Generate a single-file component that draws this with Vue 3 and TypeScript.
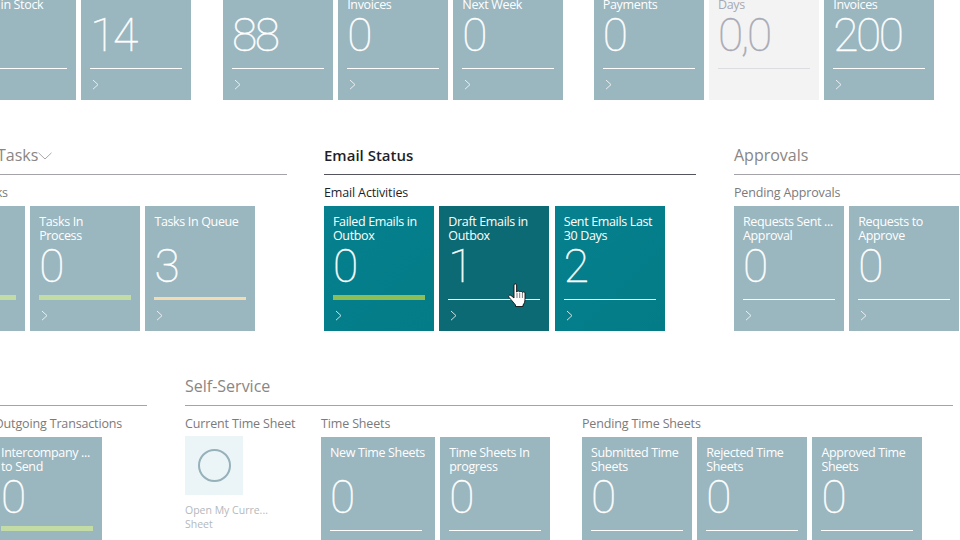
<script setup lang="ts">
interface Tile {
  title: string
  value: string
  bar?: 'line' | 'green' | 'cream' | 'strong'
  kind?: 'muted' | 'teal' | 'hover' | 'blank' | 'wide'
}
interface Group {
  heading?: string
  tiles: Tile[]
  cls: string
}
interface Section {
  heading: string
  cls: string
  chevron?: boolean
  active?: boolean
  groups: Group[]
}

const topGroups: Tile[][] = [
  [
    { title: 'Items\nLow in Stock', value: '', bar: 'line' },
    { title: '', value: '14', bar: 'line' }
  ],
  [
    { title: '', value: '88', bar: 'line' },
    { title: 'Purchase\nInvoices', value: '0', bar: 'line' },
    { title: 'Due\nNext Week', value: '0', bar: 'line' }
  ],
  [
    { title: 'Overdue\nPayments', value: '0', bar: 'line' },
    { title: 'Average\nDays', value: '0,0', bar: 'line', kind: 'blank' },
    { title: 'Sales\nInvoices', value: '200', bar: 'line' }
  ]
]

const middle: Section[] = [
  {
    heading: 'Tasks',
    cls: 'sec-tasks',
    chevron: true,
    groups: [
      {
        heading: 'My Tasks',
        cls: 'grp-right',
        tiles: [
          { title: 'Pending\nTasks', value: '0', bar: 'green' },
          { title: 'Tasks In\nProcess', value: '0', bar: 'green' },
          { title: 'Tasks In Queue', value: '3', bar: 'cream' }
        ]
      }
    ]
  },
  {
    heading: 'Email Status',
    cls: 'sec-email',
    active: true,
    groups: [
      {
        heading: 'Email Activities',
        cls: '',
        tiles: [
          { title: 'Failed Emails in\nOutbox', value: '0', bar: 'strong', kind: 'teal' },
          { title: 'Draft Emails in\nOutbox', value: '1', bar: 'line', kind: 'hover' },
          { title: 'Sent Emails Last\n30 Days', value: '2', bar: 'line', kind: 'teal' }
        ]
      }
    ]
  },
  {
    heading: 'Approvals',
    cls: 'sec-approvals',
    groups: [
      {
        heading: 'Pending Approvals',
        cls: '',
        tiles: [
          { title: 'Requests Sent ...\nApproval', value: '0', bar: 'line' },
          { title: 'Requests to\nApprove', value: '0', bar: 'line' }
        ]
      }
    ]
  }
]

const timeGroups: Group[] = [
  {
    heading: 'Time Sheets',
    cls: 'grp-time',
    tiles: [
      { title: 'New Time Sheets', value: '0', bar: 'line', kind: 'wide' },
      { title: 'Time Sheets In\nprogress', value: '0', bar: 'line' }
    ]
  },
  {
    heading: 'Pending Time Sheets',
    cls: 'grp-pending',
    tiles: [
      { title: 'Submitted Time\nSheets', value: '0', bar: 'line' },
      { title: 'Rejected Time\nSheets', value: '0', bar: 'line' },
      { title: 'Approved Time\nSheets', value: '0', bar: 'line' }
    ]
  }
]

const outgoing: Tile = { title: 'Intercompany ...\nto Send', value: '0', bar: 'green' }
</script>

<template>
  <main class="page">
    <div class="top-row">
      <div v-for="(g, i) in topGroups" :key="i" class="tiles" :class="`top-${i}`">
        <article v-for="(t, j) in g" :key="j" class="tile" :class="t.kind">
          <p class="tile-title">{{ t.title }}</p>
          <p class="tile-value">{{ t.value }}</p>
          <div class="bar-slot"><span class="bar" :class="t.bar"></span></div>
          <svg v-if="t.kind !== 'blank'" class="chev" viewBox="0 0 8 12" width="8" height="12"><path d="M1 1l5 4.6L1 10.2" /></svg>
        </article>
      </div>
    </div>

    <div class="mid-row">
      <section v-for="s in middle" :key="s.heading" class="section" :class="[s.cls, { active: s.active }]">
        <h2 class="heading">
          {{ s.heading }}
          <svg v-if="s.chevron" class="head-chev" viewBox="0 0 14 8" width="14" height="8"><path d="M.5.8L7 7l6.5-6.2" /></svg>
        </h2>
        <div v-for="g in s.groups" :key="g.heading" class="group" :class="g.cls">
          <h3 class="sub">{{ g.heading }}</h3>
          <div class="tiles">
            <article v-for="t in g.tiles" :key="t.title" class="tile" :class="t.kind">
              <p class="tile-title">{{ t.title }}</p>
              <p class="tile-value">{{ t.value }}</p>
              <div class="bar-slot"><span class="bar" :class="t.bar"></span></div>
              <svg class="chev" viewBox="0 0 8 12" width="8" height="12"><path d="M1 1l5 4.6L1 10.2" /></svg>
            </article>
          </div>
        </div>
      </section>
    </div>

    <div class="bottom-row">
      <section class="section sec-out">
        <h2 class="heading">&nbsp;</h2>
        <div class="group grp-out">
          <h3 class="sub">Outgoing Transactions</h3>
          <div class="tiles">
            <article class="tile">
              <p class="tile-title">{{ outgoing.title }}</p>
              <p class="tile-value">{{ outgoing.value }}</p>
              <div class="bar-slot"><span class="bar green"></span></div>
            </article>
          </div>
        </div>
      </section>
      <section class="section sec-self">
        <h2 class="heading">Self-Service</h2>
        <div class="self-groups">
          <div class="group grp-current">
            <h3 class="sub">Current Time Sheet</h3>
            <div class="action-icon"><span class="ring"></span></div>
            <p class="action-label">Open My Curre...<br />Sheet</p>
          </div>
          <div v-for="g in timeGroups" :key="g.heading" class="group" :class="g.cls">
            <h3 class="sub">{{ g.heading }}</h3>
            <div class="tiles">
              <article v-for="t in g.tiles" :key="t.title" class="tile" :class="t.kind">
                <p class="tile-title">{{ t.title }}</p>
                <p class="tile-value">{{ t.value }}</p>
                <div class="bar-slot"><span class="bar" :class="t.bar"></span></div>
              </article>
            </div>
          </div>
        </div>
      </section>
    </div>

    <svg class="cursor" viewBox="0 0 18 26" width="18" height="26">
      <path d="M6 2c0-1.5 2.6-1.5 2.6 0v7l.4-.1c.3-1.2 2.3-1.2 2.5 0l.3.2c.3-1.1 2.2-1 2.4.2l.3.2c.4-.9 2.4-.8 2.5.5v6c0 3-.8 4.5-2 6v1.5H7.5v-1.5C5 19 3 16.5.9 14.2c-1-1.4.6-2.8 2-1.8L6 15z" fill="#fff" stroke="#111" stroke-width=".9" stroke-linejoin="round" />
      <path d="M9 10v5M11.7 10v5M14.4 10v5" stroke="#444" stroke-width=".7" fill="none" />
    </svg>
  </main>
</template>

<style>
html, body { margin: 0; background: #fff; }
</style>

<style scoped>
.page {
  position: relative;
  width: 960px;
  height: 540px;
  overflow: hidden;
  background: #fff;
  font-family: "Open Sans", "Noto Sans", sans-serif;
}
p, h2, h3 { margin: 0; font-weight: 400; }

.top-row {
  display: flex;
  margin: -25px 0 0 -34px;
}
.top-1 { margin-left: 31.8px; }
.top-2 { margin-left: 30.5px; gap: 5.35px; }

.tiles { display: flex; gap: 5.2px; flex: none; }

.tile {
  position: relative;
  flex: none;
  width: 110px;
  height: 125px;
  box-sizing: border-box;
  padding: 9px 9px 0;
  background: #9ab6bf;
  color: #fff;
}
.tile.wide { width: 114px; }
.tile.teal { background: linear-gradient(135deg, #07808f, #037c87); }
.tile.hover { background: #0b6a74; }
.tile.blank { background: #f3f3f3; color: #a7a9b4; }

.tile-title {
  height: 28px;
  font-size: 12.5px;
  line-height: 14px;
  letter-spacing: -.35px;
  white-space: pre-line;
  overflow: hidden;
}
.tile-value {
  height: 42px;
  padding-top: 2px;
  font-family: Roboto, "Open Sans", sans-serif;
  font-size: 46px;
  font-weight: 100;
  -webkit-text-stroke: .4px currentColor;
  line-height: 42px;
  letter-spacing: -2.4px;
}
.bar-slot {
  width: 92px;
  height: 5px;
  margin-top: 8px;
  display: flex;
  align-items: flex-end;
}
.bar { display: block; width: 100%; height: 1px; }
.bar.line { background: #fff; }
.blank .bar.line { background: #dcdde0; }
.bar.green { height: 5px; background: #c3dca6; }
.bar.strong { height: 5px; background: #8dbd57; }
.bar.cream { height: 3px; background: #f3dcb4; }

.chev {
  position: absolute;
  left: 11px;
  top: 104px;
  fill: none;
  stroke: #fff;
  stroke-width: 1;
  opacity: .8;
}

.mid-row {
  display: flex;
  margin: 44px 0 0;
}
.section { flex: none; }
.heading {
  height: 22px;
  padding-bottom: 8px;
  border-bottom: 1px solid #a3a3a8;
  font-size: 16px;
  line-height: 22px;
  color: #8a8684;
  font-weight: 400;
  white-space: nowrap;
}
.active .heading {
  font-size: 15px;
  font-weight: 600;
  color: #1f1f29;
  border-bottom-color: #54545f;
}
.head-chev {
  fill: none;
  stroke: #a8a8a8;
  stroke-width: 1;
  margin-left: -5px;
  vertical-align: 1px;
}
.sub {
  height: 18px;
  margin: 9px 0 4px;
  font-size: 12.5px;
  line-height: 18px;
  letter-spacing: -.15px;
  color: #7c7a7a;
  white-space: nowrap;
}
.active .sub { color: #1f1f29; }

.sec-tasks { width: 287px; }
.sec-tasks .heading { text-indent: -3px; }
.sec-email { width: 372px; margin-left: 37px; }
.sec-email .tiles { gap: 5.35px; }
.sec-approvals { width: 300px; margin-left: 38px; }
.grp-right .sub { text-indent: -44px; }
.grp-right .tiles { margin-left: -85px; }

.bottom-row { display: flex; margin-top: 44px; }
.sec-out { width: 147px; }
.sec-out .tiles { margin-left: -8px; }
.sec-out .sub { text-indent: -6px; overflow: hidden; }
.sec-self { width: 768px; margin-left: 38px; }
.self-groups { display: flex; }
.grp-current { width: 136px; }
.grp-time { width: 261px; }
.action-icon {
  width: 58px;
  height: 59px;
  margin-top: -1px;
  background: #ebf5f7;
  display: flex;
  align-items: center;
  justify-content: center;
}
.ring {
  width: 33px;
  height: 33px;
  box-sizing: border-box;
  border: 2px solid #96b1ba;
  border-radius: 50%;
}
.action-label {
  margin-top: 8px;
  font-size: 10.5px;
  line-height: 14px;
  color: #b3b9bd;
}

.cursor {
  position: absolute;
  left: 508px;
  top: 283px;
}
</style>
